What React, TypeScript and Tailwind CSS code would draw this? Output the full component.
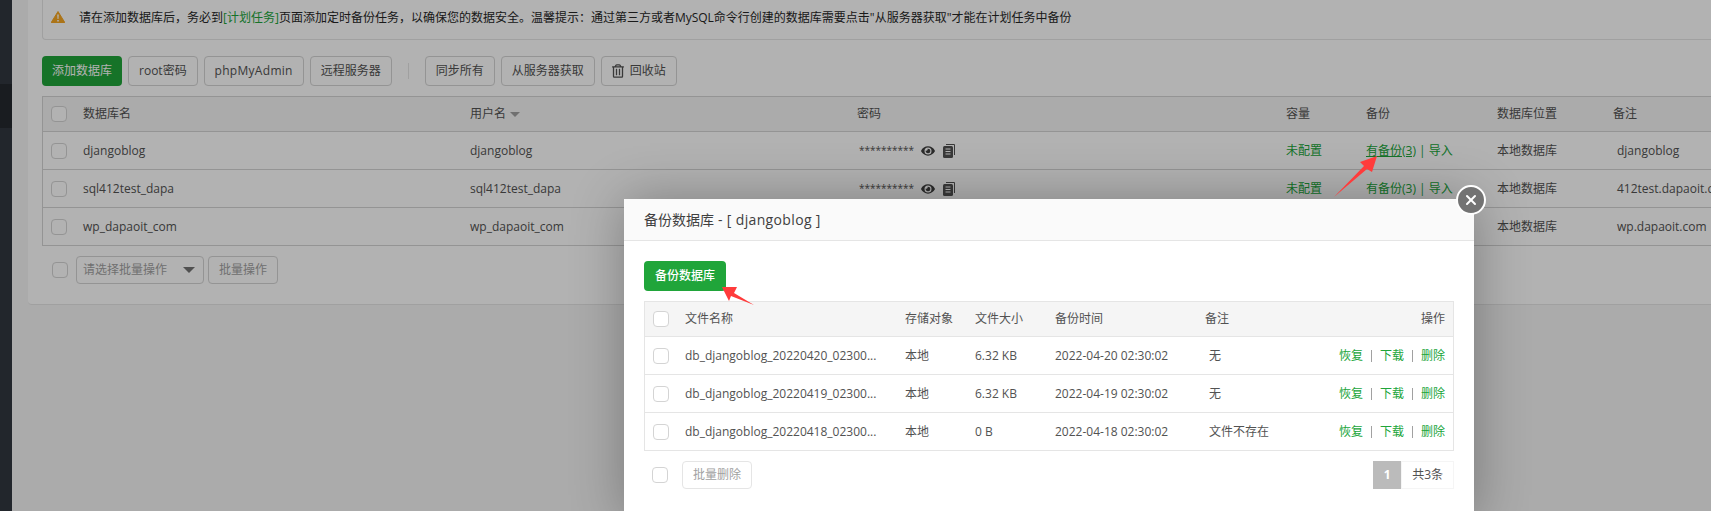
import type { ReactNode } from 'react';
import { X } from 'lucide-react';
import { FaEye, FaRegTrashAlt } from 'react-icons/fa';

const font = { fontFamily: '"Open Sans", "Noto Sans CJK SC", sans-serif' };

const dbRows = [
  { name: 'djangoblog', user: 'djangoblog', note: 'djangoblog', link: true },
  { name: 'sql412test_dapa', user: 'sql412test_dapa', note: '412test.dapaoit.com', link: false },
  { name: 'wp_dapaoit_com', user: 'wp_dapaoit_com', note: 'wp.dapaoit.com', link: false },
];

const backups = [
  { name: 'db_djangoblog_20220420_02300...', size: '6.32 KB', time: '2022-04-20 02:30:02', note: '无' },
  { name: 'db_djangoblog_20220419_02300...', size: '6.32 KB', time: '2022-04-19 02:30:02', note: '无' },
  { name: 'db_djangoblog_20220418_02300...', size: '0 B', time: '2022-04-18 02:30:02', note: '文件不存在' },
];

const dbCols = 'grid grid-cols-[40px_387px_387px_429px_80px_131px_116px_1fr] items-center';
const fileCols = 'grid grid-cols-[40px_220px_70px_80px_150px_1fr_120px] items-center';

const Check = () => <span className="block h-4 w-4 rounded-sm border border-neutral-300 bg-white" />;

const Btn = ({ children, className = '' }: { children: ReactNode; className?: string }) => (
  <button className={`flex h-7.5 items-center justify-center gap-1.5 rounded-sm border border-neutral-300 bg-white px-2.5 text-xs text-neutral-600 ${className}`}>
    {children}
  </button>
);

const Bar = () => <span className="h-3 w-px bg-neutral-400" />;

export default function App() {
  return (
    <div style={font} className="relative flex h-[511px] w-full overflow-hidden bg-neutral-100 text-xs text-neutral-600">
      {/* Sidebar */}
      <aside className="flex w-3 shrink-0 flex-col bg-[#31373f]">
        <div className="mt-21 h-11 bg-[#25292f]" />
      </aside>

      {/* Page */}
      <main className="w-[1800px] shrink-0 pl-4">
        <div className="rounded-b-sm border-b border-neutral-200 bg-white px-3.5 pb-5">
          <div className="flex h-10 items-start gap-3.5 rounded-b-sm border border-t-0 border-neutral-200 bg-white px-2 pt-2.5 text-neutral-800">
            <svg viewBox="0 0 14 12" className="mt-px h-3 w-3.5 shrink-0">
              <path d="M7 0.5L13.8 11.5H0.2Z" fill="#f5a623" stroke="#f5a623" strokeLinejoin="round" />
              <path d="M6.2 3.5h1.6l-.3 4.5h-1zM6.2 9h1.6v1.5H6.2z" fill="#fff" />
            </svg>
            <p>
              请在添加数据库后，务必到<span className="text-[#20a53a]">[计划任务]</span>页面添加定时备份任务，以确保您的数据安全。温馨提示：通过第三方或者MySQL命令行创建的数据库需要点击"从服务器获取"才能在计划任务中备份
            </p>
          </div>

          <div className="mt-4 flex items-center gap-1.5">
            <button className="h-7.5 rounded-sm bg-[#20a53a] px-2.5 text-white">添加数据库</button>
            <Btn>root密码</Btn>
            <Btn className="w-25 tracking-wide">phpMyAdmin</Btn>
            <Btn>远程服务器</Btn>
            <span className="mx-2.5 h-4 w-px bg-neutral-200" />
            <Btn>同步所有</Btn>
            <Btn>从服务器获取</Btn>
            <Btn>
              <FaRegTrashAlt className="h-3.5 w-3" />
              回收站
            </Btn>
          </div>

          <div className="mt-2.5 border border-neutral-300">
            <div className={`${dbCols} h-8.5 bg-neutral-100`}>
              <span className="pl-2"><Check /></span>
              <span>数据库名</span>
              <span className="flex items-center gap-1">
                用户名
                <span className="h-0 w-0 border-x-[5px] border-t-[5px] border-x-transparent border-t-neutral-400" />
              </span>
              <span>密码</span>
              <span>容量</span>
              <span>备份</span>
              <span>数据库位置</span>
              <span>备注</span>
            </div>
            {dbRows.map((row) => (
              <div key={row.name} className={`${dbCols} h-9.5 border-t border-neutral-300`}>
                <span className="pl-2"><Check /></span>
                <span>{row.name}</span>
                <span>{row.user}</span>
                <span className="flex items-center">
                  <span className="w-16 pl-0.5 text-[10px]">**********</span>
                  <FaEye className="h-3.5 w-3.5 text-neutral-700" />
                  <svg viewBox="0 0 12 14" className="ml-2 h-3.5 w-3 text-neutral-600" fill="currentColor">
                    <path d="M3 0h8a1 1 0 0 1 1 1v10h-1V1H3z" />
                    <rect y="2" width="10" height="12" rx="1.5" />
                    <path d="M2.5 5h5M2.5 7.5h5M2.5 10h5" stroke="#fff" />
                  </svg>
                </span>
                <span className="text-[#20a53a]">未配置</span>
                <span className="text-[#20a53a]">
                  <span className={row.link ? 'underline' : ''}>有备份(3)</span> | 导入
                </span>
                <span>本地数据库</span>
                <span className="pl-1">{row.note}</span>
              </div>
            ))}
          </div>

          <div className="mt-2.5 flex items-center gap-1 pl-2.5">
            <Check />
            <span className="ml-1 flex h-7 w-32 items-center justify-between rounded-sm border border-neutral-300 pl-1.5 pr-2 text-neutral-400">
              请选择批量操作
              <span className="h-0 w-0 border-x-[6px] border-t-[6px] border-x-transparent border-t-neutral-500" />
            </span>
            <span className="flex h-7 items-center rounded-sm border border-neutral-300 px-2.5 text-neutral-400">批量操作</span>
          </div>
        </div>
      </main>

      {/* Dimmed overlay */}
      <div className="absolute inset-0 bg-black/30" />

      {/* Modal */}
      <div className="absolute left-[624px] top-[199px] h-80 w-[850px] bg-white shadow-[1px_1px_50px_rgba(0,0,0,0.3)]">
        <div className="flex h-10.5 items-center border-b border-neutral-200 bg-neutral-50 px-5 text-sm text-neutral-700">
          备份数据库<span className="tracking-wide">&nbsp;- [ djangoblog ]</span>
        </div>
        <div className="px-5 pt-5">
          <button className="h-7.5 w-20.5 rounded-sm bg-[#20a53a] font-medium text-white">备份数据库</button>
          <div className="mt-2.5 border border-neutral-200">
            <div className={`${fileCols} h-8.5 bg-neutral-100`}>
              <span className="pl-2"><Check /></span>
              <span>文件名称</span>
              <span>存储对象</span>
              <span>文件大小</span>
              <span>备份时间</span>
              <span>备注</span>
              <span className="pr-2 text-right">操作</span>
            </div>
            {backups.map((file) => (
              <div key={file.time} className={`${fileCols} h-9.5 border-t border-neutral-200`}>
                <span className="pl-2"><Check /></span>
                <span>{file.name}</span>
                <span>本地</span>
                <span>{file.size}</span>
                <span>{file.time}</span>
                <span className="pl-1">{file.note}</span>
                <span className="flex items-center justify-end gap-2 pr-2 text-[#20a53a]">
                  恢复<Bar />下载<Bar />删除
                </span>
              </div>
            ))}
          </div>
          <div className="mt-2.5 flex items-center pl-2">
            <Check />
            <span className="ml-3.5 flex h-7 items-center rounded-sm border border-neutral-200 px-2.5 text-neutral-400">批量删除</span>
            <span className="ml-auto flex h-7 w-7 items-center justify-center bg-[#bbb] font-bold text-white">1</span>
            <span className="flex h-7 items-center border border-neutral-100 bg-white px-2.5">共3条</span>
          </div>
        </div>
        <button className="absolute -right-3 -top-3.5 flex h-7.5 w-7.5 items-center justify-center rounded-full border-2 border-white bg-neutral-500 text-white">
          <X className="h-4 w-4" strokeWidth={3} />
        </button>
      </div>

      {/* Red annotation arrows */}
      <svg className="absolute inset-0 h-full w-full" viewBox="0 0 1711 511" fill="#ff3b3b">
        <path d="M1377 156L1372 172L1367 169L1334 197L1364 166L1360 162Z" />
        <path d="M722 287L737 287L734 293L754 305L731 296L729 301Z" />
      </svg>
    </div>
  );
}
